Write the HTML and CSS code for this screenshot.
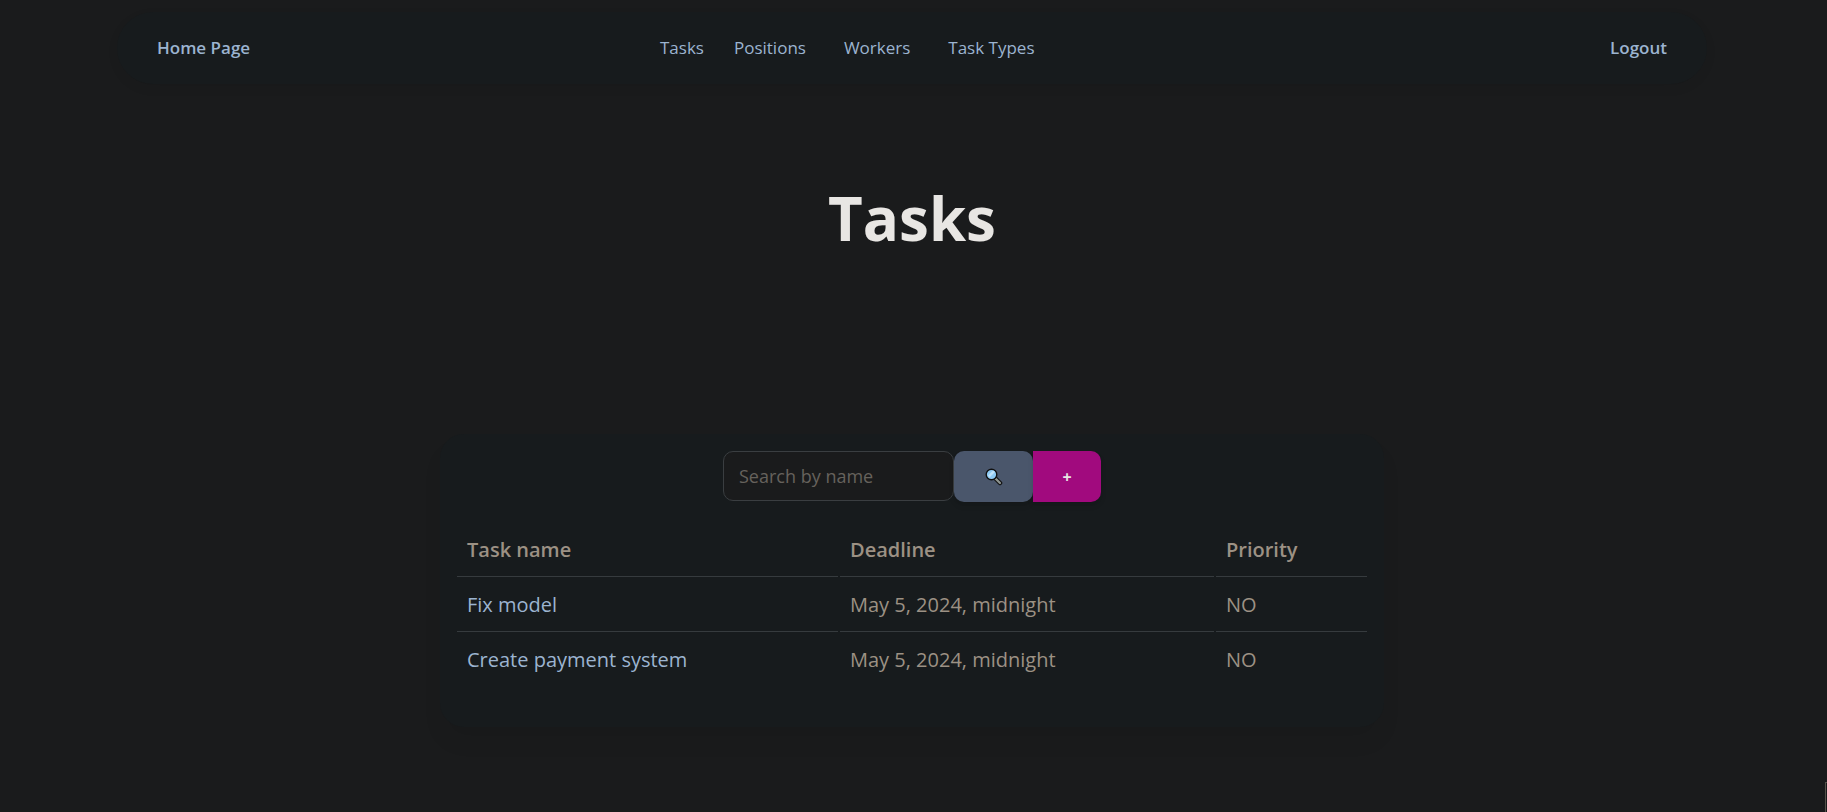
FILE: index.html
```html
<!DOCTYPE html>
<html lang="en">
<head>
<meta charset="utf-8">
<title>Tasks</title>
<link rel="stylesheet" href="styles.css">
</head>
<body>
<nav class="navbar">
  <a class="nav-edge" href="#">Home Page</a>
  <ul class="nav-links">
    <li><a href="#">Tasks</a></li>
    <li><a href="#">Positions</a></li>
    <li class="nav-wide"><a href="#">Workers</a></li>
    <li class="nav-wide"><a href="#">Task Types</a></li>
  </ul>
  <a class="nav-edge nav-end" href="#">Logout</a>
</nav>
<header class="page-header"><h1>Tasks</h1></header>
<main class="card">
  <form class="search">
    <input class="search-input" type="text" placeholder="Search by name" aria-label="Search by name">
    <button class="btn btn-search" type="button" aria-label="Search">
      <svg width="18" height="18" viewBox="0 0 18 18">
        <path d="M11 11 15 15" stroke="#111" stroke-width="4.500" stroke-linecap="round"/>
        <path d="M10.500 10.500 15 15" stroke="#8f9692" stroke-width="2.200" stroke-linecap="round"/>
        <circle cx="6.500" cy="6.500" r="5.300" fill="#8fcbf5" stroke="#111" stroke-width="1.400"/>
        <path d="M3 7.500 8 2.500 10 4 4.500 9.500Z" fill="#c0e3fa"/>
      </svg>
    </button>
    <button class="btn btn-add" type="button">+</button>
  </form>
  <table class="tasks">
    <thead>
      <tr><th class="col-name">Task name</th><th class="col-deadline">Deadline</th><th>Priority</th></tr>
    </thead>
    <tbody>
      <tr><td><a href="#">Fix model</a></td><td>May 5, 2024, midnight</td><td>NO</td></tr>
      <tr><td><a href="#">Create payment system</a></td><td>May 5, 2024, midnight</td><td>NO</td></tr>
    </tbody>
  </table>
</main>
<div class="edge-panel"></div>
</body>
</html>
```
FILE: styles.css
```css
* { box-sizing: border-box; }
body {
  margin: 0;
  padding-right: 3px;
  min-height: 100vh;
  background: #1a1b1c;
  color: #9c9184;
  font-family: "Open Sans", "Noto Sans", sans-serif;
  font-size: 20px;
  line-height: 32px;
  overflow: hidden;
}
a { color: #9cb4d0; text-decoration: none; }
.navbar {
  display: grid;
  grid-template-columns: 503px auto 1fr;
  align-items: center;
  width: calc(100% - 234px);
  height: 72px;
  margin: 12px auto 0;
  padding: 0 40px;
  border-radius: 36px;
  background: #171b1d;
  box-shadow: 0 4px 12px 0 rgba(0, 0, 0, .06);
  font-size: 17px;
}
.nav-edge { font-weight: 600; }
.nav-end { text-align: right; }
.nav-links {
  display: flex;
  gap: 30px;
  margin: 0;
  padding: 0;
  list-style: none;
}
.nav-wide { padding-left: 8px; }
.page-header { padding: 88px 0 170px; text-align: center; }
h1 {
  margin: 0;
  color: #e8e6e3;
  font-size: 60px;
  line-height: 92px;
  font-weight: 700;
}
.card {
  width: 944px;
  max-width: calc(100% - 32px);
  margin: 0 auto;
  padding: 17px 15px 38px;
  border-radius: 24px;
  background: #171b1d;
  box-shadow: 0 16px 20px 0 rgba(0, 0, 0, .05);
}
.search { display: flex; justify-content: center; align-items: flex-start; }
.search-input {
  width: 231px;
  height: 50px;
  padding: 0 15px;
  border: 1px solid #3a3e41;
  border-radius: 10px;
  background: #1a1b1c;
  color: #e8e6e3;
  font: inherit;
  font-size: 18px;
}
.search-input::placeholder { color: #66625c; opacity: 1; }
.btn {
  display: flex;
  align-items: center;
  justify-content: center;
  height: 51px;
  padding: 0;
  border: 0;
  border-radius: 10px;
  color: #e8e6e3;
  font: inherit;
  font-size: 16px;
  font-weight: 700;
  box-shadow: 0 4px 7px -1px rgba(0, 0, 0, .11), 0 2px 4px -1px rgba(0, 0, 0, .07);
}
.btn-search { width: 79px; background: #4a566b; }
.btn-add { width: 68px; border-radius: 0 10px 10px 0; background: #a10a7e; }
.tasks {
  width: 100%;
  margin-top: 20px;
  border-spacing: 2px;
  table-layout: fixed;
  text-align: left;
}
.tasks th, .tasks td { padding: 10px; border-bottom: 1px solid #363b3e; }
.tasks th { font-weight: 600; }
.tasks tbody tr:last-child td { border-bottom-color: transparent; }
.col-name { width: 381px; }
.col-deadline { width: 374px; }
.edge-panel {
  position: fixed;
  right: 0;
  bottom: 0;
  width: 2px;
  height: 30px;
  border-top: 1px solid #55524b;
  border-left: 1px solid #55524b;
}
```
